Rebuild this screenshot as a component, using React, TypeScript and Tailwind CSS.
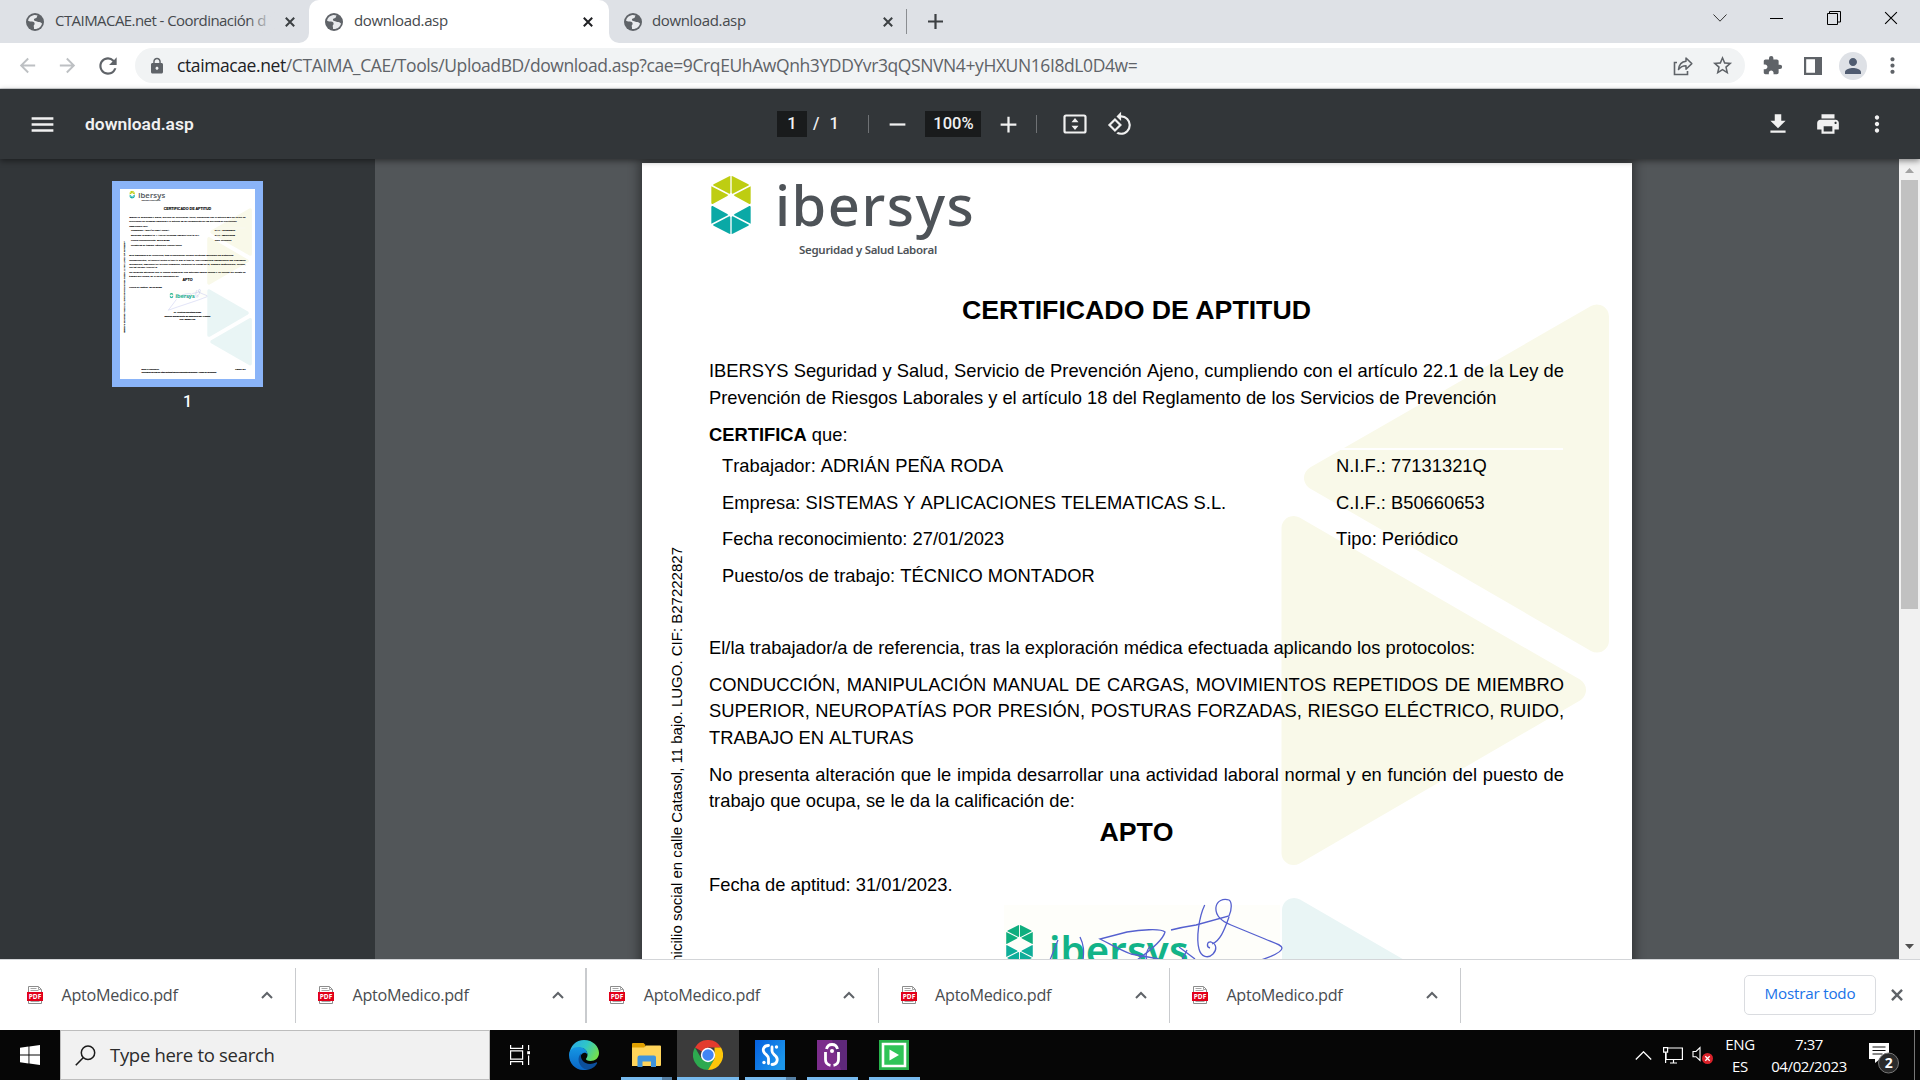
import React from "react";
import {
  MdAdd,
  MdArrowBack,
  MdArrowForward,
  MdExtension,
  MdLock,
  MdMenu,
  MdMoreVert,
  MdPerson,
  MdPrint,
  MdPublic,
  MdRefresh,
  MdRemove,
  MdRotate90DegreesCcw,
  MdStarBorder,
} from "react-icons/md";

const UI = "font-['Open_Sans','Noto_Sans',sans-serif]";

/* ---------- Browser chrome ---------- */

function CloseX({ size = 10, width = 2, className = "" }: { size?: number; width?: number; className?: string }) {
  return (
    <svg width={size} height={size} viewBox="0 0 10 10" className={className}>
      <path d="M0.8 0.8 9.2 9.2M9.2 0.8 0.8 9.2" stroke="currentColor" strokeWidth={width} fill="none" />
    </svg>
  );
}

/* Dark globe with light land masses, the default page icon */
function Globe() {
  return (
    <svg width="18" height="18" viewBox="0 0 18 18" className="ml-[2px] shrink-0">
      <circle cx="9" cy="9" r="9" fill="#5f6368" />
      <path
        d="M8.200 1.900c-3 .4-5.600 2.700-6.200 5.700 1 .9 2.400 1 3.800.9 1.600-.1 2.600.6 2.800 1.900.2 1-.8 1.400-.9 2.400 0 1 .5 1.500.3 3.200 3.600.6 7.200-1.700 8-5.400-.9-.5-1.500-1.600-2.800-1.500-1.300.2-1.800-.9-3-.9-1.300 0-2.300-.4-2.300-1.600 0-1.300 1.500-1 2.400-1.600.8-.6.5-1.600 1.300-2.400-1-.5-2.200-.8-3.400-.7z"
        fill="#e8eaed"
      />
    </svg>
  );
}

function TabStrip() {
  return (
    <div className={`flex h-[43px] w-full bg-[#dee1e6] text-[15px] text-[#45494d] ${UI}`}>
      <div className="flex w-[299px] items-center pl-[24px]">
        <Globe />
        <span className="relative ml-[11px] w-[220px] overflow-hidden pb-[2px] whitespace-nowrap tracking-[-0.56px]">
          CTAIMACAE.net - Coordinación d
          <span className="absolute inset-y-0 right-0 w-[24px] bg-linear-to-r from-[#dee1e6]/20 to-[#dee1e6]" />
        </span>
        <CloseX className="ml-[10px] shrink-0 text-[#3c4043]" />
      </div>
      <div className="flex w-[10px] bg-white">
        <div className="w-full rounded-br-[10px] bg-[#dee1e6]" />
      </div>
      <div className="w-[300px] bg-[#dee1e6]">
        <div className="flex h-full items-center rounded-t-[10px] bg-white pl-[14px]">
          <Globe />
          <span className="ml-[11px] w-[229px] pb-[2px] tracking-[-0.35px]">download.asp</span>
          <CloseX className="text-[#202124]" />
        </div>
      </div>
      <div className="flex w-[10px] bg-white">
        <div className="w-full rounded-bl-[10px] bg-[#dee1e6]" />
      </div>
      <div className="flex w-[288px] items-center pl-[3px]">
        <Globe />
        <span className="ml-[10px] w-[231px] pb-[2px] tracking-[-0.35px]">download.asp</span>
        <CloseX className="text-[#3c4043]" />
        <div className="ml-[13px] h-[25px] w-px bg-[#8a8d91]" />
      </div>
      <div className="flex w-[56px] items-center justify-center">
        <svg width="15" height="15" viewBox="0 0 15 15">
          <path d="M7.5 0v15M0 7.5h15" stroke="#3c4043" strokeWidth="2.2" />
        </svg>
      </div>
      <div className="ml-auto flex h-[36px] items-center text-black">
        <div className="flex w-[57px] justify-center">
          <svg width="14" height="8" viewBox="0 0 14 8">
            <path d="M.5.5 7 7.2 13.500.5" stroke="#333" fill="none" />
          </svg>
        </div>
        <div className="flex w-[57px] justify-center">
          <div className="h-px w-[13px] bg-black" />
        </div>
        <div className="flex w-[57px] justify-center">
          <svg width="14" height="14" viewBox="0 0 14 14">
            <path d="M.5 2.500h10v11h-10zM2.500 2.500v-2h11v10.500h-2.500" stroke="#000" fill="none" />
          </svg>
        </div>
        <div className="flex w-[58px] justify-center">
          <CloseX size={14} width={0.8} />
        </div>
      </div>
    </div>
  );
}

function AddressBar() {
  return (
    <div className={`flex h-[46px] w-full items-center border-b border-[#d3d5d8] bg-white text-[#5f6368] ${UI}`}>
      <div className="flex w-[135px] items-center pl-[16px]">
        <MdArrowBack className="size-[23px] text-[#bdc0c3]" />
        <MdArrowForward className="ml-[17px] size-[23px] text-[#bdc0c3]" />
        <MdRefresh className="ml-[16px] size-[26px]" />
      </div>
      <div className="flex h-[35px] w-[1610px] items-center rounded-full bg-[#f1f3f4] pl-[13px]">
        <MdLock className="size-[18px]" />
        <span className="ml-[11px] w-[1480px] text-[17.5px] tracking-[-0.4px] whitespace-nowrap">
          <span className="text-[#202124]">ctaimacae.net</span>
          /CTAIMA_CAE/Tools/UploadBD/download.asp?cae=9CrqEUhAwQnh3YDDYvr3qQSNVN4+yHXUN16I8dL0D4w=
        </span>
        <svg width="20" height="20" viewBox="0 0 20 20" className="ml-[16px] shrink-0">
          <path d="M4 6.500H1.500v12h13V15" stroke="currentColor" strokeWidth="1.600" fill="none" />
          <path
            d="M13 2v3.200C8 5.700 6 9 5.500 13.500c2-2.600 4-3.700 7.500-3.700v3.400l5.800-5.600z"
            stroke="currentColor"
            strokeWidth="1.500"
            fill="none"
            strokeLinejoin="round"
          />
        </svg>
        <MdStarBorder className="ml-[18px] size-[23px] shrink-0" />
      </div>
      <MdExtension className="ml-[17px] size-[21px]" />
      <svg width="18" height="18" viewBox="0 0 18 18" className="ml-[21px]">
        <path d="M0 0h18v18H0zM2.200 2.200v13.600h8.800V2.200z" fill="currentColor" fillRule="evenodd" />
      </svg>
      <div className="ml-[17px] flex size-[28px] items-center justify-center rounded-full bg-[#dee1e6]">
        <MdPerson className="size-[24px] text-[#4f5b70]" />
      </div>
      <MdMoreVert className="ml-[13px] size-[25px]" />
    </div>
  );
}

/* ---------- PDF viewer ---------- */

function PdfToolbar() {
  return (
    <div className="relative z-10 flex h-[70px] w-full items-center bg-[#323639] font-[Roboto,sans-serif] text-[#f1f1f1] shadow-[0_2px_6px_rgba(0,0,0,0.45)]">
      <MdMenu className="ml-[28px] size-[29px]" />
      <span className="ml-[28px] w-[692px] text-[17.400px] font-semibold">download.asp</span>
      <div className="flex h-[26px] w-[30px] items-center justify-center bg-[#191b1c] text-[16.500px] font-medium">1</div>
      <span className="ml-[6px] text-[16.500px] font-medium">/</span>
      <span className="ml-[10px] w-[39px] text-[16.500px] font-medium">1</span>
      <div className="h-[18px] w-px bg-[#6f7275]" />
      <div className="flex w-[56px] justify-center">
        <MdRemove className="size-[27px]" />
      </div>
      <div className="flex h-[26px] w-[56px] items-center justify-center bg-[#191b1c] text-[16.500px] font-medium">100%</div>
      <div className="flex w-[55px] justify-center">
        <MdAdd className="size-[27px]" />
      </div>
      <div className="h-[18px] w-px bg-[#6f7275]" />
      <svg width="24" height="20" viewBox="0 0 24 20" className="ml-[26px]">
        <rect x="1.500" y="1.500" width="21" height="17" rx="1.500" stroke="currentColor" strokeWidth="2.200" fill="none" />
        <path d="M12 4l3.500 4.200h-7zM12 16l3.500-4.200h-7z" fill="currentColor" />
      </svg>
      <MdRotate90DegreesCcw className="ml-[20px] size-[26px]" />
      <div className="ml-auto flex items-center">
        <svg width="26" height="26" viewBox="0 0 24 24">
          <path d="M19 9h-4V3H9v6H5l7 7 7-7zM5 18v2h14v-2H5z" fill="currentColor" />
        </svg>
        <MdPrint className="ml-[24px] size-[26px]" />
        <MdMoreVert className="mr-[30px] ml-[23px] size-[26px]" />
      </div>
    </div>
  );
}

function Hexagon({ className, top, bottom }: { className: string; top: string; bottom: string }) {
  return (
    <svg viewBox="0 0 120 174" preserveAspectRatio="none" className={className}>
      <g fill={top}>
        <path d="M58 0v50q-1 4-3 3L6 28q0-2 2-3L52 2q3-2 6-2zM62 0v50q1 4 3 3l49-25q0-2-2-3L68 2q-3-2-6-2z" />
        <path d="M1 31l51 26q-2 2-3 3L5 84q-3 1-4-2V31zM119 31L68 57q2 2 3 3l44 24q3 1 4-2V31z" />
      </g>
      <g fill={bottom}>
        <path d="M58 174v-50q-1-4-3-3L6 146q0 2 2 3l44 23q3 2 6 2zM62 174v-50q1-4 3-3l49 25q0 2-2 3l-44 23q-3 2-6 2z" />
        <path d="M1 143l51-26q-2-2-3-3L5 90q-3-1-4 2v51zM119 143l-51-26q2-2 3-3l44-24q3-1 4 2v51z" />
      </g>
    </svg>
  );
}

function Line({ children }: { children: React.ReactNode }) {
  return <div className="whitespace-nowrap [text-align-last:justify]">{children}</div>;
}

function Certificate() {
  return (
    <div className="relative flex h-[1397px] w-[990px] bg-white font-['Liberation_Sans',Arial,sans-serif] text-[18.330px] leading-[26.600px] text-black [font-kerning:none]">
      <svg viewBox="642 163 990 1397" className="absolute inset-0 size-full">
        <g strokeWidth="24" strokeLinejoin="round">
          <path d="M1597 316.500v324L1316 478z" fill="#f9f9e9" stroke="#f9f9e9" />
          <path d="M1293.500 528v325L1574 690z" fill="#f9f9e9" stroke="#f9f9e9" />
          <path d="M1597 1121v324L1316 1283z" fill="#e9f5f5" stroke="#e9f5f5" />
          <path d="M1294 910v325L1574 1072z" fill="#e9f5f5" stroke="#e9f5f5" />
        </g>
        <path d="M1335 449h228" stroke="#fff" strokeWidth="2" />
        <path d="M1004 905h276v54h-276z" fill="#fefefa" />
      </svg>

      <div className="relative flex w-[67px] items-start justify-center pt-[384px]">
        <span className="ml-[3px] rotate-180 text-[15px] leading-[18px] whitespace-nowrap [writing-mode:vertical-rl]">
          IBERSYS Seguridad y Salud, S.L. Domicilio social en calle Catasol, 11 bajo. LUGO. CIF: B27222827
        </span>
      </div>

      <div className="relative w-[855px]">
        <div className="flex h-[131px] pt-[13px] pl-[2px]">
          <Hexagon className="h-[58px] w-[40px]" top="#becd12" bottom="#0aa9a6" />
          <div className="ml-[24px] w-[210px] font-['Noto_Sans',sans-serif] text-[#4e5358]">
            <div className="h-[65px] text-[56px] leading-[57px] font-medium tracking-[1.500px]">ibersys</div>
            <div className="pl-[24px] text-[11.500px] leading-[18px] font-semibold tracking-[-0.300px] whitespace-nowrap">
              Seguridad y Salud Laboral
            </div>
          </div>
        </div>
        <h1 className="text-center text-[26.700px] leading-[32px] font-bold [font-kerning:auto]">CERTIFICADO DE APTITUD</h1>
        <div className="mt-[32px]">
          <Line>IBERSYS Seguridad y Salud, Servicio de Prevención Ajeno, cumpliendo con el artículo 22.1 de la Ley de</Line>
          <div>Prevención de Riesgos Laborales y el artículo 18 del Reglamento de los Servicios de Prevención</div>
        </div>
        <div className="mt-[11px]">
          <b>CERTIFICA</b> que:
        </div>
        <div className="mt-[4px] grid auto-rows-[36.800px] grid-cols-[614px_1fr] pl-[13px]">
          <div>Trabajador: ADRIÁN PEÑA RODA</div>
          <div>N.I.F.: 77131321Q</div>
          <div>Empresa: SISTEMAS Y APLICACIONES TELEMATICAS S.L.</div>
          <div>C.I.F.: B50660653</div>
          <div>Fecha reconocimiento: 27/01/2023</div>
          <div>Tipo: Periódico</div>
          <div>Puesto/os de trabajo: TÉCNICO MONTADOR</div>
        </div>
        <div className="mt-[34.600px]">El/la trabajador/a de referencia, tras la exploración médica efectuada aplicando los protocolos:</div>
        <div className="mt-[10.500px]">
          <Line>CONDUCCIÓN, MANIPULACIÓN MANUAL DE CARGAS, MOVIMIENTOS REPETIDOS DE MIEMBRO</Line>
          <Line>SUPERIOR, NEUROPATÍAS POR PRESIÓN, POSTURAS FORZADAS, RIESGO ELÉCTRICO, RUIDO,</Line>
          <div>TRABAJO EN ALTURAS</div>
        </div>
        <div className="mt-[10.100px]">
          <Line>No presenta alteración que le impida desarrollar una actividad laboral normal y en función del puesto de</Line>
          <div>trabajo que ocupa, se le da la calificación de:</div>
        </div>
        <div className="mt-[1.500px] text-center text-[26.700px] leading-[32px] font-bold">APTO</div>
        <div className="mt-[23.500px]">Fecha de aptitud: 31/01/2023.</div>
        <div className="mt-[27px] flex pl-[297px]">
          <Hexagon className="h-[39px] w-[27px]" top="#0fae7e" bottom="#0fae9a" />
          <span className="ml-[16px] pt-[5px] font-['Noto_Sans',sans-serif] text-[40px] leading-[40px] font-semibold tracking-[0.200px] text-[#12b388]">
            ibersys
          </span>
        </div>
        <div className="mt-[88px] text-center text-[16px] leading-[24px] font-bold">
          <div>Dr. Cristina Quintana Baez</div>
          <div>Médico especialista en Medicina del Trabajo</div>
          <div>Col: 282857700</div>
        </div>
        <div className="mt-[348px] pl-[90px] text-[12px] leading-[20px] font-bold">
          <div className="flex justify-between">
            <span>IBERSYS SEGURIDAD</span>
            <span>Página 1 de 1</span>
          </div>
          <div>Verificación de firma en: https://extranet.ibersys.com/portal/verificacion · Código de verificación</div>
        </div>
      </div>

      <svg viewBox="642 163 990 1397" className="absolute inset-0 size-full" fill="none" stroke="#5560cf" strokeWidth="1.300">
        <path d="M1204.700 905C1199 917 1196 938 1199 949c2 8 9 10 14 5 4-4 4-10-2-12-4-1-5 5-1 6" />
        <path d="M1171 930q12-3 25-5l33-9c3-7 3-14 0-16-6-2-12 1-13 7-1 8 5 14 15 18l34 14c10 4 17 6 17 9 0 4-9 8-21 12-70 28-180 60-265 92l60-80" />
        <path d="M1229 917c-5 14-9 24-17 27" />
        <path d="M1137 960c14-10 26-20 28-28-4-4-26-2-38 0l-27 7c12 6 20 11 31 15l28 5" />
        <path d="M1080 937c4 8 4 14 3 23M1050 960l8-20M1150 946c-4 6-5 10-3 14M1179 947l16 12M1187 950l-5 10" />
      </svg>
    </div>
  );
}

function PdfViewer() {
  return (
    <div className="flex h-[800px] w-full overflow-hidden bg-[#525659]">
      <aside className="flex w-[375px] shrink-0 flex-col items-center bg-[#323639] pt-[22px]">
        <div className="h-[206px] w-[151px] bg-[#8ab4f8] p-[8px]">
          <div className="h-[190px] w-[135px] overflow-hidden">
            <div className="w-[990px] origin-top-left scale-[0.1364] [-webkit-text-stroke:0.8px]">
              <Certificate />
            </div>
          </div>
        </div>
        <span className="mt-[3px] font-[Roboto,sans-serif] text-[16px] font-medium text-white">1</span>
      </aside>
      <main className="flex flex-1 pt-[4px] pl-[267px]">
        <div className="h-[1397px] shadow-[0_0_10px_3px_rgba(0,0,0,0.4)]">
          <Certificate />
        </div>
      </main>
      <div className="flex w-[21px] flex-col items-center bg-[#f1f1f1] pt-[9px] pb-[10px]">
        <svg width="9" height="5" viewBox="0 0 9 5">
          <path d="M0 5 4.500 0 9 5z" fill="#a3a3a3" />
        </svg>
        <div className="mt-[7px] h-[429px] w-[17px] bg-[#c1c1c1]" />
        <svg width="9" height="5" viewBox="0 0 9 5" className="mt-auto">
          <path d="M0 0 4.500 5 9 0z" fill="#505050" />
        </svg>
      </div>
    </div>
  );
}

/* ---------- Download shelf ---------- */

function PdfFileIcon() {
  return (
    <svg width="16" height="18" viewBox="0 0 16 18" className="shrink-0">
      <path d="M1.500.5h10l3 3v14h-13z" fill="#fff" stroke="#8c8c8c" />
      <path d="M11.500.5v3h3M3.500 2.500h6M3.500 4.500h8M3.500 15.500h9" stroke="#a5a5a5" fill="none" />
      <rect y="6" width="16" height="9" fill="#e2001a" />
      <text x="8" y="13" textAnchor="middle" fontSize="6.500" fontWeight="700" fill="#fff" fontFamily="Open Sans, sans-serif">
        PDF
      </text>
    </svg>
  );
}

const separators = ["w-px", "w-[2px]", "w-px", "w-px", "w-px"];

function DownloadShelf() {
  return (
    <div className={`flex h-[71px] w-full items-center border-t border-[#d3d5d8] bg-white ${UI}`}>
      <div className="-ml-[4px] flex">
        {separators.map((sep, i) => (
          <div key={i} className="flex h-[55px] w-[291.300px] items-center [&:first-child]:w-[300px] [&:first-child]:pl-[9px]">
            <div className="flex w-full items-center pl-[22px]">
              <PdfFileIcon />
              <span className="ml-[18.500px] w-[199.500px] text-[16.200px] tracking-[-0.3px] text-[#494c50]">AptoMedico.pdf</span>
              <svg width="12" height="8" viewBox="0 0 12 8" className="shrink-0">
                <path d="M1 7l5-5 5 5" stroke="#5f6368" strokeWidth="2" fill="none" />
              </svg>
            </div>
            <div className={`h-full shrink-0 bg-[#c9cbce] ${sep}`} />
          </div>
        ))}
      </div>
      <div className="mr-[17px] ml-auto flex items-center">
        <div className="flex h-[40px] w-[132px] items-center justify-center rounded-[5px] border border-[#dadce0] pb-[3px] text-[15.200px] font-medium tracking-[-0.2px] text-[#1a73e8]">
          Mostrar todo
        </div>
        <CloseX size={12} className="ml-[15px] text-[#5f6368]" />
      </div>
    </div>
  );
}

/* ---------- Windows taskbar ---------- */

function TaskCell({ children, active, line }: { children: React.ReactNode; active?: boolean; line?: "full" | "single" | "stack" }) {
  return (
    <div className={`flex h-[50px] w-[62px] flex-col items-center ${active ? "bg-[#3b3b3b]" : ""}`}>
      <div className="flex h-[47px] items-center pt-[3px]">{children}</div>
      {line === "full" && <div className="h-[3px] w-full bg-[#76b9ed]" />}
      {line === "single" && <div className="h-[3px] w-[51px] bg-[#76b9ed]" />}
      {line === "stack" && (
        <div className="flex h-[3px] w-[51px]">
          <div className="w-[41px] bg-[#76b9ed]" />
          <div className="w-[10px] bg-[#557fa3]" />
        </div>
      )}
    </div>
  );
}

function EdgeIcon() {
  return (
    <svg width="30" height="30" viewBox="0 0 30 30">
      <defs>
        <linearGradient id="edgeTop" x1="0" y1="0.200" x2="1" y2="0.600">
          <stop offset="0" stopColor="#2aa9e8" />
          <stop offset="0.500" stopColor="#2fc6c8" />
          <stop offset="1" stopColor="#74e04c" />
        </linearGradient>
        <linearGradient id="edgeLeft" x1="0" y1="0" x2="0" y2="1">
          <stop offset="0" stopColor="#1597e4" />
          <stop offset="1" stopColor="#0a66c6" />
        </linearGradient>
      </defs>
      <path d="M.5 14C1 6 7 0 15 0c9 0 15 6.500 15 13 0 5-4 8-8.500 8-3 0-5-1-4.500-2.200.8-1.200 1.500-2 1.500-4C18.500 10 14 7 9 8 4 9 1 11 .5 14z" fill="url(#edgeTop)" />
      <path d="M0 15c0-5 4-8 9.500-8 5 0 9 3.500 9 7.500-1-1.500-2.500-2-4-1.500-3 1-4 5-2.500 9 1.400 4 4.500 6.500 8 7-2 1-4 1-6 1C6 30 0 23 0 15z" fill="url(#edgeLeft)" />
      <path d="M12 13.500c-4 4-3 11 2 14.500 5 3.500 11 .5 14-4.500.5-1-.2-1.400-1-1-5 2.500-11 1.500-13.500-2-1.500-2.200-2-4.500-1.500-7z" fill="#0c4f9b" />
    </svg>
  );
}

function ChromeIcon() {
  return (
    <svg width="30" height="30" viewBox="0 0 30 30">
      <path d="M15 15 2 7.500A15 15 0 0 1 28 7.500H15z" fill="#e33b2e" />
      <path d="M2 7.500A15 15 0 0 0 15 30l6.500-11.300L15 15 8.500 18.700z" fill="#2da94f" />
      <path d="M28 7.500A15 15 0 0 1 15 30l6.500-11.300V7.500z" fill="#fdc60a" />
      <circle cx="15" cy="15" r="7.200" fill="#fff" />
      <circle cx="15" cy="15" r="5.700" fill="#4285f4" />
    </svg>
  );
}

function Taskbar() {
  return (
    <div className={`flex h-[50px] w-full bg-[#060606] text-white ${UI}`}>
      <div className="flex w-[60px] items-center justify-center">
        <svg width="20" height="20" viewBox="0 0 20 20">
          <path d="M0 2.800 8.500 1.600v7.900H0zM9.400 1.500 20 0v9.500H9.400zM0 10.400h8.500v8L0 17.200zM9.400 10.400H20V20L9.400 18.500z" fill="#fff" />
        </svg>
      </div>
      <div className="flex w-[430px] items-center border border-[#bdbdbd] bg-[#f1f1f1] pl-[14px] text-[#2b2b2b]">
        <svg width="21" height="21" viewBox="0 0 21 21">
          <circle cx="13" cy="7.700" r="6.700" stroke="#1a1a1a" strokeWidth="1.500" fill="none" />
          <path d="M8.400 12.500.8 20.200" stroke="#1a1a1a" strokeWidth="1.600" />
        </svg>
        <span className="ml-[14px] text-[18.500px] tracking-[-0.3px]">Type here to search</span>
      </div>
      <div className="flex w-[63px] items-center justify-center pr-[4px]">
        <svg width="20" height="20" viewBox="0 0 20 20" fill="none" stroke="#fff" strokeWidth="1.200">
          <path d="M.6 0v3.400h12V0M.6 5.800h12v8.400H.6zM.6 20v-3.400h12V20M18.600 0v5M18.600 10.500V20" />
          <path d="M17.200 6.200h2.800v3h-2.800z" fill="#fff" stroke="none" />
        </svg>
      </div>
      <TaskCell>
        <EdgeIcon />
      </TaskCell>
      <TaskCell line="stack">
        <svg width="29" height="24" viewBox="0 0 29 24">
          <path d="M0 1q0-1 1-1h10.500l2 2-1 4H0z" fill="#e0a000" />
          <path d="M0 4.500h12l2-2h14q1 0 1 1V22q0 1-1 1H0z" fill="#ffd45a" />
          <path d="M5.500 24v-9.500q0-2 2-2h14.500q2 0 2 2V24h-5v-5.500h-8.500V24z" fill="#3f94dc" />
        </svg>
      </TaskCell>
      <TaskCell active line="full">
        <ChromeIcon />
      </TaskCell>
      <TaskCell line="stack">
        <svg width="30" height="30" viewBox="0 0 30 30">
          <defs>
            <linearGradient id="blueTile" x1="0" y1="0" x2="1" y2="0.600">
              <stop offset="0" stopColor="#0560e0" />
              <stop offset="1" stopColor="#1c96ea" />
            </linearGradient>
          </defs>
          <path d="M0 0h30v30H0z" fill="url(#blueTile)" />
          <g fill="none" stroke="#fff" strokeWidth="2.800" strokeLinecap="round">
            <path d="M13.500 5.500C8.500 5.500 7 10 9.500 13c2 2.200 4 3 4 5.500v5" />
            <path d="M17 7v4c0 2.500 2 3.300 4 5.500 2.500 3 1 8-4 8" />
          </g>
          <circle cx="21.500" cy="7" r="1.700" fill="#fff" />
          <circle cx="9" cy="22.500" r="1.700" fill="#fff" />
        </svg>
      </TaskCell>
      <TaskCell line="single">
        <svg width="30" height="30" viewBox="0 0 30 30">
          <path d="M0 0h30v30H0z" fill="#7b2d8b" />
          <path d="M15 0h15v30H24z" fill="#4b2470" opacity="0.600" />
          <g fill="none" stroke="#fff" strokeWidth="2.800">
            <path d="M9.500 9Q10.500 4.500 15 4.500T20.500 9" />
            <path d="M8.500 12v7.500q0 5 5 5.800M21.500 12v7.500q0 5-5 5.800" />
          </g>
          <circle cx="15" cy="11" r="2" fill="#fff" />
        </svg>
      </TaskCell>
      <TaskCell line="single">
        <svg width="30" height="30" viewBox="0 0 30 30">
          <path d="M0 0h30v30H0z" fill="#27b34b" />
          <path d="M4 4h22v22H4z" fill="#2fc457" stroke="#fff" strokeWidth="2.600" />
          <path d="M10.500 9.500v11l9.500-5.500z" fill="#fff" />
        </svg>
      </TaskCell>

      <div className="ml-auto flex items-center text-[15px] leading-[22px] tracking-[-0.4px]">
        <svg width="17" height="9" viewBox="0 0 17 9">
          <path d="M.8 8.500 8.500.8l7.700 7.700" stroke="#fff" strokeWidth="1.300" fill="none" />
        </svg>
        <svg width="20" height="17" viewBox="0 0 20 17" className="ml-[11px]" fill="none" stroke="#fff" strokeWidth="1.200">
          <path d="M5 1h14.400v11.500H3V6M7 16h7M10.500 12.500V16" />
          <path d="M.6.6h4v4.500h-4zM2.600 5v11" />
        </svg>
        <svg width="22" height="18" viewBox="0 0 22 18" className="ml-[9px]">
          <path d="M1 5.500h3L8 1.500v13l-4-3.800H1z" stroke="#fff" strokeWidth="1.100" fill="none" />
          <circle cx="15.500" cy="12.500" r="5.500" fill="#d9222a" />
          <path d="M13.300 10.300l4.400 4.400M17.700 10.300l-4.400 4.400" stroke="#fff" strokeWidth="1.300" />
        </svg>
        <div className="ml-[8px] flex w-[36px] flex-col items-center">
          <span>ENG</span>
          <span>ES</span>
        </div>
        <div className="ml-[11px] flex w-[80px] flex-col items-center">
          <span>7:37</span>
          <span>04/02/2023</span>
        </div>
        <svg width="32" height="34" viewBox="0 0 32 34" className="mt-[6px] ml-[19px]">
          <path d="M1 2h20v16h-9l-5 4v-4H1z" fill="#fff" />
          <path d="M4.500 6h13M4.500 9.500h13M4.500 13h10" stroke="#111" strokeWidth="1.200" />
          <circle cx="20.500" cy="22" r="10" fill="#2b2b2b" stroke="#777" />
          <text x="20.500" y="27" textAnchor="middle" fontSize="14" fontWeight="700" fill="#fff" fontFamily="Open Sans, sans-serif">
            2
          </text>
        </svg>
        <div className="mr-[5px] ml-[14px] h-[50px] w-px bg-[#777]" />
      </div>
    </div>
  );
}

export default function App() {
  return (
    <div className="flex h-[1080px] w-[1920px] flex-col overflow-hidden">
      <TabStrip />
      <AddressBar />
      <PdfToolbar />
      <PdfViewer />
      <DownloadShelf />
      <Taskbar />
    </div>
  );
}
